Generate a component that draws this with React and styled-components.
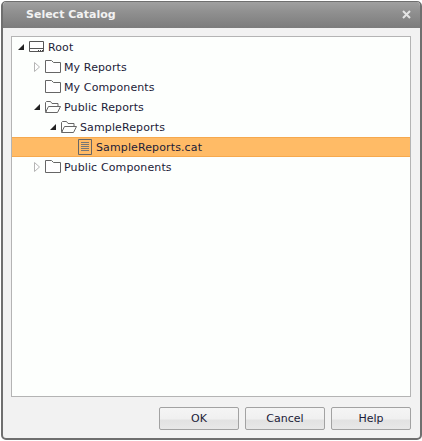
import React from "react";
import styled, { createGlobalStyle } from "styled-components";

const Global = createGlobalStyle`
  html, body { margin: 0; padding: 0; background: #ffffff; }
  #root { width: 422px; height: 441px; }
`;

const Dialog = styled.div`
  box-sizing: border-box;
  width: 421px;
  height: 439px;
  margin: 1px 0 0 1px;
  border: 2px solid #6f6f6f;
  border-top-width: 1px;
  border-radius: 5px;
  background: #f2f2f2;
  display: flex;
  flex-direction: column;
  overflow: hidden;
  font-family: "DejaVu Sans", Verdana, sans-serif;
`;

const TitleBar = styled.div`
  box-sizing: border-box;
  height: 26px;
  flex: none;
  display: flex;
  align-items: center;
  justify-content: space-between;
  padding: 0 9px 2px 23px;
  background: linear-gradient(#a0a0a0 0, #919191 35%, #7c7c7c 100%);
`;

const Title = styled.span`
  color: #f2f2f2;
  font: bold 11px "DejaVu Sans", Verdana, sans-serif;
`;

const Close = styled.svg`
  width: 9px;
  height: 9px;
  display: block;
`;

const Body = styled.div`
  flex: 1;
  display: flex;
  flex-direction: column;
  padding: 8px 9px 8px 8px;
  min-height: 0;
`;

const TreePanel = styled.div`
  box-sizing: border-box;
  height: 361px;
  flex: none;
  border: 1px solid #b4b4b4;
  background: #fdfffd;
`;

const Row = styled.div`
  box-sizing: border-box;
  height: 20px;
  display: flex;
  align-items: center;
  padding-left: ${(p) => p.$indent}px;
  gap: 1px;
  font-size: 11px;
  color: #1c1c38;
  background: ${(p) => (p.$selected ? "#ffbb66" : "transparent")};
  border-style: solid;
  border-color: #f6a94e;
  border-width: ${(p) => (p.$selected ? "1px 0" : "0")};
`;

const Toggle = styled.svg`
  width: 11px;
  height: 10px;
  flex: none;
`;

const Glyph = styled.svg`
  width: 16px;
  height: 16px;
  flex: none;
  margin-right: 2px;
`;

const Label = styled.span`
  white-space: nowrap;
  letter-spacing: 0.12px;
`;

const Footer = styled.div`
  display: flex;
  justify-content: flex-end;
  gap: 6px;
  margin-top: 10px;
`;

const Button = styled.button`
  box-sizing: border-box;
  width: 80px;
  height: 23px;
  padding: 0;
  border: 1px solid #a2a2a2;
  border-radius: 2px;
  background: linear-gradient(#f5f5f5 0, #f0f0f0 50%, #e2e2e2 60%, #e8e8e8 100%);
  color: #1c1c38;
  font: 11px "DejaVu Sans", Verdana, sans-serif;
`;

const Expanded = () => (
  <Toggle viewBox="0 0 11 10"><path d="M7 2v6H1z" fill="#222" /></Toggle>
);
const Collapsed = () => (
  <Toggle viewBox="0 0 11 10"><path d="M1.5 .5l5 4.5-5 4.5z" fill="#fff" stroke="#b5b5b5" /></Toggle>
);
const Spacer = styled.span`
  width: 11px;
  flex: none;
`;

const ClosedFolder = () => (
  <Glyph viewBox="0 0 16 16">
    <path d="M.5 1.5h6l2 2h7v10H.5z" fill="#fff" stroke="#666" />
  </Glyph>
);
const OpenFolder = () => (
  <Glyph viewBox="0 0 16 16">
    <path d="M2.5 13.5l-2-1v-9l1-1h4l1.5 2h6v3M.5 13.5h12l3-6h-12z" fill="none" stroke="#666" />
  </Glyph>
);
const Drive = () => (
  <Glyph viewBox="0 0 16 16">
    <path d="M.5 2.5h14v10H.5zM.5 9.5h14" fill="#fff" stroke="#555" />
    <path d="M9 11.5h1M11 11.5h1M13 11.5h1" stroke="#444" />
  </Glyph>
);
const CatalogFile = () => (
  <Glyph viewBox="0 0 16 16">
    <path d="M1.5 .5h13v15h-13z" fill="none" stroke="#666" />
    <path d="M4 3.5h8M4 5.5h8M4 7.5h8M4 9.5h8M4 11.5h8" stroke="#777" />
  </Glyph>
);

export default function App() {
  return (
    <>
      <Global />
      <Dialog>
        <TitleBar>
          <Title>Select Catalog</Title>
          <Close viewBox="0 0 9 9">
            <path d="M1 1l7 7M8 1l-7 7" stroke="#e4e4e4" strokeWidth="2" />
          </Close>
        </TitleBar>
        <Body>
          <TreePanel>
            <Row $indent={5}><Expanded /><Drive /><Label>Root</Label></Row>
            <Row $indent={21}><Collapsed /><ClosedFolder /><Label>My Reports</Label></Row>
            <Row $indent={21}><Spacer /><ClosedFolder /><Label>My Components</Label></Row>
            <Row $indent={21}><Expanded /><OpenFolder /><Label>Public Reports</Label></Row>
            <Row $indent={37}><Expanded /><OpenFolder /><Label>SampleReports</Label></Row>
            <Row $indent={53} $selected><Spacer /><CatalogFile /><Label>SampleReports.cat</Label></Row>
            <Row $indent={21}><Collapsed /><ClosedFolder /><Label>Public Components</Label></Row>
          </TreePanel>
          <Footer>
            <Button>OK</Button>
            <Button>Cancel</Button>
            <Button>Help</Button>
          </Footer>
        </Body>
      </Dialog>
    </>
  );
}
